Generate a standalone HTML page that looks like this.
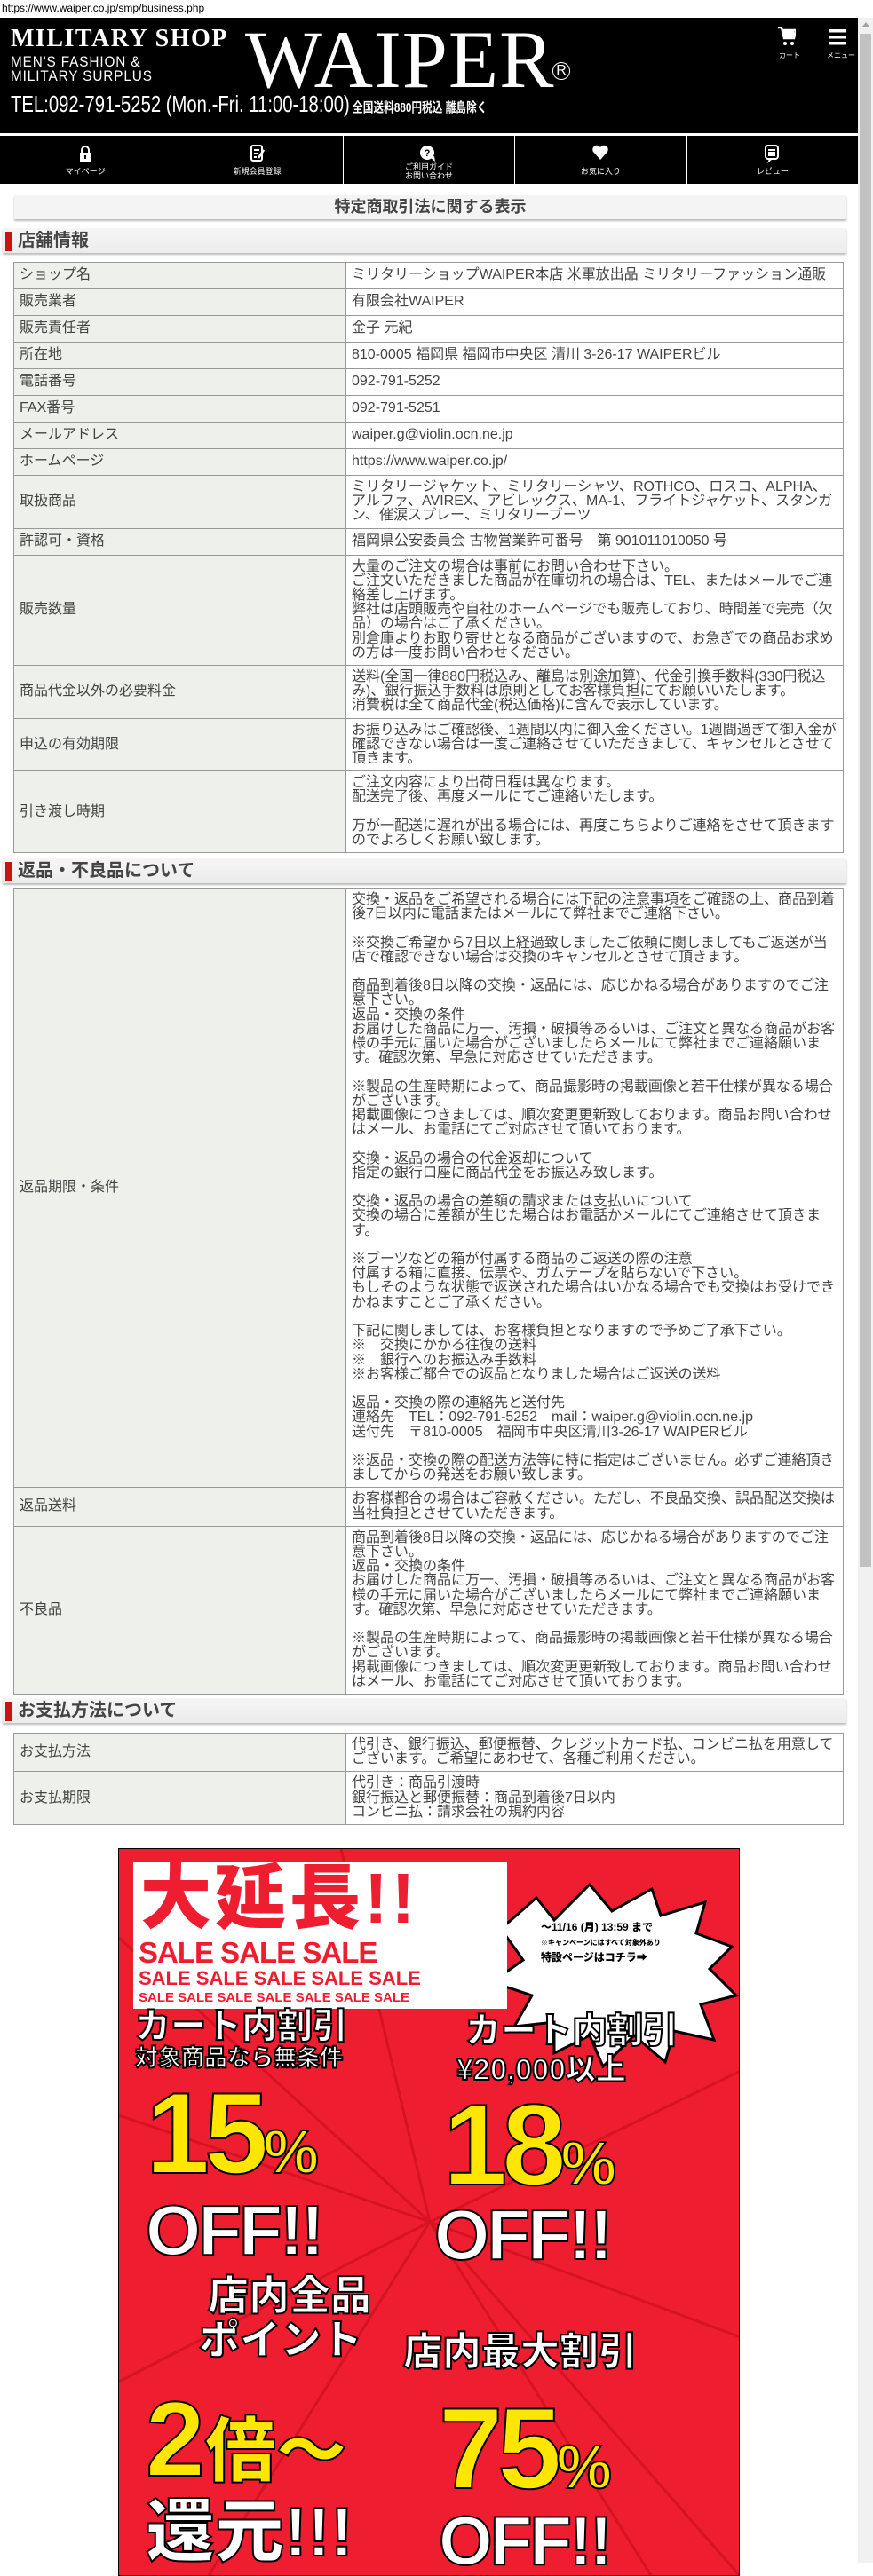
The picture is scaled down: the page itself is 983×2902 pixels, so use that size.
<!DOCTYPE html>
<html><head><meta charset="utf-8"><style>
*{margin:0;padding:0;box-sizing:border-box}
body{width:983px;height:2887px;overflow:hidden;background:#fff;font-family:"Liberation Sans","Noto Sans CJK JP",sans-serif;color:#333;position:relative}
.url{position:absolute;left:2px;top:2px;font-size:12px;color:#000;font-family:"Liberation Sans Narrow","Liberation Sans",sans-serif}
.sb{position:absolute;left:966px;top:20px;width:17px;height:2867px;background:#f1f1f1}
.sb i{position:absolute;left:2px;top:18px;width:13px;height:1727px;background:#c1c1c1}
.sb b{position:absolute;left:5px;top:5px;border:4px solid transparent;border-bottom:5px solid #a3a3a3;border-top:0}
.hd{position:absolute;left:0;top:20px;width:966px;height:130px;background:#000;color:#fff}
.nav{position:absolute;left:0;top:153px;width:966px;height:54px;background:#000;display:flex}
.nav div{flex:1;border-left:1px solid #fff;color:#fff;font-size:9px;text-align:center;position:relative;line-height:10px}
.nav div:first-child{border-left:0}
.nav svg{position:absolute;left:50%;top:10px;transform:translateX(-50%)}
.nav span{position:absolute;left:0;right:0;top:35px}
.title{position:absolute;left:16px;top:220px;width:937px;height:27px;background:#f4f4f4;box-shadow:0 2px 2px #bbb;text-align:center;font-weight:bold;font-size:18px;line-height:27px;color:#444}
.sec{position:absolute;left:3px;width:950px;height:28px;background:linear-gradient(#f6f6f6,#ececec);box-shadow:0 2px 2px #bbb;font-weight:bold;font-size:20px;line-height:28px;color:#444;padding-left:17px}
.sec:before{content:"";position:absolute;left:3px;top:4px;width:7px;height:22px;background:#c8160e}
table{position:absolute;left:15px;width:935px;border-collapse:collapse;font-size:16px;line-height:16.2px;color:#444}
td{border:1px solid #999;padding:5px 6px;vertical-align:middle;height:30px}
td:first-child{width:374px;background:#eef0ec}
.bn{position:absolute;left:133px;top:2082px;width:700px;height:820px;border:1px solid #000;background:#ee1d30;overflow:hidden;font-family:"Liberation Sans","Noto Sans CJK JP",sans-serif;font-weight:900}
.bn .t{position:absolute;white-space:nowrap;-webkit-text-stroke:2px #000;line-height:1}
.y{color:#ffe600}.w{color:#fff}
</style></head><body>
<div class="url">https://www.waiper.co.jp/smp/business.php</div>
<div class="sb"><b></b><i></i></div>
<div class="hd">
 <div style="position:absolute;left:12px;top:8px;font-family:'Liberation Serif',serif;font-weight:bold;font-size:28px;letter-spacing:1.5px">MILITARY SHOP</div>
 <div style="position:absolute;left:12px;top:42px;font-size:17px;line-height:16px;letter-spacing:1px;transform:scaleX(.9);transform-origin:left">MEN'S FASHION &amp;<br>MILITARY SURPLUS</div>
 <div style="position:absolute;left:276px;top:-6px;font-family:'Liberation Serif',serif;font-size:92px;letter-spacing:1px">WAIPER</div>
 <div style="position:absolute;left:622px;top:50px;font-size:16px;border:1.5px solid #fff;border-radius:50%;width:20px;height:20px;text-align:center;line-height:18px">R</div>
 <div style="position:absolute;left:12px;top:82px;font-size:26px;white-space:nowrap;transform:scaleX(.78);transform-origin:left">TEL:092-791-5252 (Mon.-Fri. 11:00-18:00)<span style="font-size:15px;font-weight:bold"> 全国送料880円税込 離島除く</span></div>
 <svg style="position:absolute;left:876px;top:10px" width="20" height="23" viewBox="0 0 20 23"><path d="M0 1h4l3 12h11l2-9H6" stroke="#fff" stroke-width="2.5" fill="none"/><rect x="6" y="5" width="12" height="7" fill="#fff"/><circle cx="8" cy="19" r="2" fill="#fff"/><circle cx="16" cy="19" r="2" fill="#fff"/></svg>
 <svg style="position:absolute;left:933px;top:13px" width="20" height="18"><rect y="0" width="20" height="3.5" fill="#fff"/><rect y="7" width="20" height="3.5" fill="#fff"/><rect y="14" width="20" height="3.5" fill="#fff"/></svg>
 <div style="position:absolute;left:877px;top:37px;font-size:8px">カート</div>
 <div style="position:absolute;left:931px;top:37px;font-size:8px">メニュー</div>
</div>
<div class="nav">
 <div><svg width="14" height="20" viewBox="0 0 14 20"><path d="M3 9V6a4 4 0 0 1 8 0v3" stroke="#fff" stroke-width="2" fill="none"/><rect x="1" y="9" width="12" height="10" fill="#fff"/><rect x="6" y="12" width="2" height="4" fill="#000"/></svg><span>マイページ</span></div>
 <div><svg width="16" height="20" viewBox="0 0 16 20"><rect x="1" y="1" width="12" height="17" rx="2" stroke="#fff" stroke-width="2" fill="none"/><path d="M4 6h6M4 10h5M4 14h3" stroke="#fff" stroke-width="2"/><path d="M9 15l6-9" stroke="#fff" stroke-width="2.5"/></svg><span>新規会員登録</span></div>
 <div><svg width="22" height="22" viewBox="0 0 22 22"><circle cx="9" cy="9" r="8" fill="#fff"/><path d="M13 15l5 4-1-6" fill="#fff"/><text x="9" y="13" font-size="11" font-weight="bold" text-anchor="middle" fill="#000">?</text></svg><span style="top:30px">ご利用ガイド<br>お問い合わせ</span></div>
 <div><svg width="18" height="18" viewBox="0 0 18 18"><path d="M9 17L1 8a4.5 4.5 0 0 1 8-5 4.5 4.5 0 0 1 8 5z" fill="#fff"/></svg><span>お気に入り</span></div>
 <div><svg width="18" height="22" viewBox="0 0 18 22"><rect x="1" y="1" width="14" height="15" rx="3" stroke="#fff" stroke-width="2" fill="none"/><path d="M4 6h8M4 9h8M4 12h8" stroke="#fff" stroke-width="2"/><path d="M5 16l-2 5 6-5" fill="#fff"/></svg><span>レビュー</span></div>
</div>
<div class="title">特定商取引法に関する表示</div>
<div class="sec" style="top:257px">店舗情報</div>
<table style="top:295px">
<tr><td>ショップ名</td><td>ミリタリーショップWAIPER本店 米軍放出品 ミリタリーファッション通販</td></tr>
<tr><td>販売業者</td><td>有限会社WAIPER</td></tr>
<tr><td>販売責任者</td><td>金子 元紀</td></tr>
<tr><td>所在地</td><td>810-0005 福岡県 福岡市中央区 清川 3-26-17 WAIPERビル</td></tr>
<tr><td>電話番号</td><td>092-791-5252</td></tr>
<tr><td>FAX番号</td><td>092-791-5251</td></tr>
<tr><td>メールアドレス</td><td>waiper.g@violin.ocn.ne.jp</td></tr>
<tr><td>ホームページ</td><td>https://www.waiper.co.jp/</td></tr>
<tr><td>取扱商品</td><td>ミリタリージャケット、ミリタリーシャツ、ROTHCO、ロスコ、ALPHA、アルファ、AVIREX、アビレックス、MA-1、フライトジャケット、スタンガン、催涙スプレー、ミリタリーブーツ</td></tr>
<tr><td>許認可・資格</td><td>福岡県公安委員会 古物営業許可番号　第 901011010050 号</td></tr>
<tr><td>販売数量</td><td>大量のご注文の場合は事前にお問い合わせ下さい。<br>ご注文いただきました商品が在庫切れの場合は、TEL、またはメールでご連絡差し上げます。<br>弊社は店頭販売や自社のホームページでも販売しており、時間差で完売（欠品）の場合はご了承ください。<br>別倉庫よりお取り寄せとなる商品がございますので、お急ぎでの商品お求めの方は一度お問い合わせください。</td></tr>
<tr><td>商品代金以外の必要料金</td><td>送料(全国一律880円税込み、離島は別途加算)、代金引換手数料(330円税込み)、銀行振込手数料は原則としてお客様負担にてお願いいたします。<br>消費税は全て商品代金(税込価格)に含んで表示しています。</td></tr>
<tr><td>申込の有効期限</td><td>お振り込みはご確認後、1週間以内に御入金ください。1週間過ぎて御入金が確認できない場合は一度ご連絡させていただきまして、キャンセルとさせて頂きます。</td></tr>
<tr><td>引き渡し時期</td><td>ご注文内容により出荷日程は異なります。<br>配送完了後、再度メールにてご連絡いたします。<br><br>万が一配送に遅れが出る場合には、再度こちらよりご連絡をさせて頂きますのでよろしくお願い致します。</td></tr>
</table>
<div class="sec" style="top:967px">返品・不良品について</div>
<table style="top:1000px">
<tr><td>返品期限・条件</td><td>交換・返品をご希望される場合には下記の注意事項をご確認の上、商品到着後7日以内に電話またはメールにて弊社までご連絡下さい。<br><br>※交換ご希望から7日以上経過致しましたご依頼に関しましてもご返送が当店で確認できない場合は交換のキャンセルとさせて頂きます。<br><br>商品到着後8日以降の交換・返品には、応じかねる場合がありますのでご注意下さい。<br>返品・交換の条件<br>お届けした商品に万一、汚損・破損等あるいは、ご注文と異なる商品がお客様の手元に届いた場合がございましたらメールにて弊社までご連絡願います。確認次第、早急に対応させていただきます。<br><br>※製品の生産時期によって、商品撮影時の掲載画像と若干仕様が異なる場合がございます。<br>掲載画像につきましては、順次変更更新致しております。商品お問い合わせはメール、お電話にてご対応させて頂いております。<br><br>交換・返品の場合の代金返却について<br>指定の銀行口座に商品代金をお振込み致します。<br><br>交換・返品の場合の差額の請求または支払いについて<br>交換の場合に差額が生じた場合はお電話かメールにてご連絡させて頂きます。<br><br>※ブーツなどの箱が付属する商品のご返送の際の注意<br>付属する箱に直接、伝票や、ガムテープを貼らないで下さい。<br>もしそのような状態で返送された場合はいかなる場合でも交換はお受けできかねますことご了承ください。<br><br>下記に関しましては、お客様負担となりますので予めご了承下さい。<br>※　交換にかかる往復の送料<br>※　銀行へのお振込み手数料<br>※お客様ご都合での返品となりました場合はご返送の送料<br><br>返品・交換の際の連絡先と送付先<br>連絡先　TEL：092-791-5252　mail：waiper.g@violin.ocn.ne.jp<br>送付先　〒810-0005　福岡市中央区清川3-26-17 WAIPERビル<br><br>※返品・交換の際の配送方法等に特に指定はございません。必ずご連絡頂きましてからの発送をお願い致します。</td></tr>
<tr><td>返品送料</td><td>お客様都合の場合はご容赦ください。ただし、不良品交換、誤品配送交換は当社負担とさせていただきます。</td></tr>
<tr><td>不良品</td><td>商品到着後8日以降の交換・返品には、応じかねる場合がありますのでご注意下さい。<br>返品・交換の条件<br>お届けした商品に万一、汚損・破損等あるいは、ご注文と異なる商品がお客様の手元に届いた場合がございましたらメールにて弊社までご連絡願います。確認次第、早急に対応させていただきます。<br><br>※製品の生産時期によって、商品撮影時の掲載画像と若干仕様が異なる場合がございます。<br>掲載画像につきましては、順次変更更新致しております。商品お問い合わせはメール、お電話にてご対応させて頂いております。</td></tr>
</table>
<div class="sec" style="top:1913px">お支払方法について</div>
<table style="top:1952px">
<tr><td>お支払方法</td><td>代引き、銀行振込、郵便振替、クレジットカード払、コンビニ払を用意してございます。ご希望にあわせて、各種ご利用ください。</td></tr>
<tr><td>お支払期限</td><td>代引き：商品引渡時<br>銀行振込と郵便振替：商品到着後7日以内<br>コンビニ払：請求会社の規約内容</td></tr>
</table>
<div class="bn">
 <svg style="position:absolute;left:0;top:0" width="700" height="820"><g stroke="#c80c1c" stroke-width="3" opacity=".6"><path d="M350 420L0 100M350 420L0 300M350 420L0 600M350 420L100 820M350 420L600 820M350 420L700 550M350 420L700 250M350 420L700 820M350 420L250 0"/></g>
 <path d="M430 90 L470 55 L490 80 L530 40 L555 70 L600 45 L610 75 L660 60 L650 95 L690 110 L665 135 L695 165 L655 175 L670 215 L625 205 L615 240 L580 210 L545 245 L530 210 L490 230 L490 195 L445 200 L465 165 L420 150 L455 125Z" fill="#fff" stroke="#000" stroke-width="3"/></svg>
 <div style="position:absolute;left:16px;top:15px;width:421px;height:165px;background:#fff"></div>
 <div class="t" style="left:24px;top:16px;font-size:80px;color:#ee1d30;-webkit-text-stroke:0;letter-spacing:4px">大延長!!</div>
 <div class="t" style="left:22px;top:100px;font-size:33px;color:#ee1d30;-webkit-text-stroke:0;letter-spacing:-1px">SALE SALE SALE</div>
 <div class="t" style="left:22px;top:135px;font-size:22px;color:#ee1d30;-webkit-text-stroke:0">SALE SALE SALE SALE SALE</div>
 <div class="t" style="left:22px;top:160px;font-size:15px;color:#ee1d30;-webkit-text-stroke:0">SALE SALE SALE SALE SALE SALE SALE</div>
 <div class="t" style="left:475px;top:80px;font-size:12px;color:#000;-webkit-text-stroke:0;line-height:16px">～11/16 (月) 13:59 まで<br><span style="font-size:8px">※キャンペーンにはすべて対象外あり</span><br>特設ページはコチラ➡</div>
 <div class="t w" style="left:18px;top:180px;font-size:40px">カート内割引</div>
 <div class="t w" style="left:18px;top:222px;font-size:26px">対象商品なら無条件</div>
 <div class="t w" style="left:390px;top:185px;font-size:40px">カート内割引</div>
 <div class="t w" style="left:380px;top:232px;font-size:34px">¥20,000以上</div>
 <div class="t y" style="left:30px;top:255px;font-size:130px;letter-spacing:-6px">15<span style="font-size:70px">%</span></div>
 <div class="t y" style="left:365px;top:268px;font-size:130px;letter-spacing:-6px">18<span style="font-size:70px">%</span></div>
 <div class="t w" style="left:30px;top:390px;font-size:80px;letter-spacing:-3px">OFF!!</div>
 <div class="t w" style="left:355px;top:395px;font-size:80px;letter-spacing:-3px">OFF!!</div>
 <div class="t w" style="left:100px;top:480px;font-size:46px">店内全品</div>
 <div class="t w" style="left:90px;top:530px;font-size:46px">ポイント</div>
 <div class="t w" style="left:320px;top:545px;font-size:44px">店内最大割引</div>
 <div class="t y" style="left:30px;top:605px;font-size:120px">2<span style="font-size:80px">倍～</span></div>
 <div class="t y" style="left:360px;top:610px;font-size:130px;letter-spacing:-6px">75<span style="font-size:70px">%</span></div>
 <div class="t w" style="left:30px;top:730px;font-size:78px">還元!!!</div>
 <div class="t w" style="left:360px;top:740px;font-size:78px;letter-spacing:-3px">OFF!!</div>
</div>
</body></html>
